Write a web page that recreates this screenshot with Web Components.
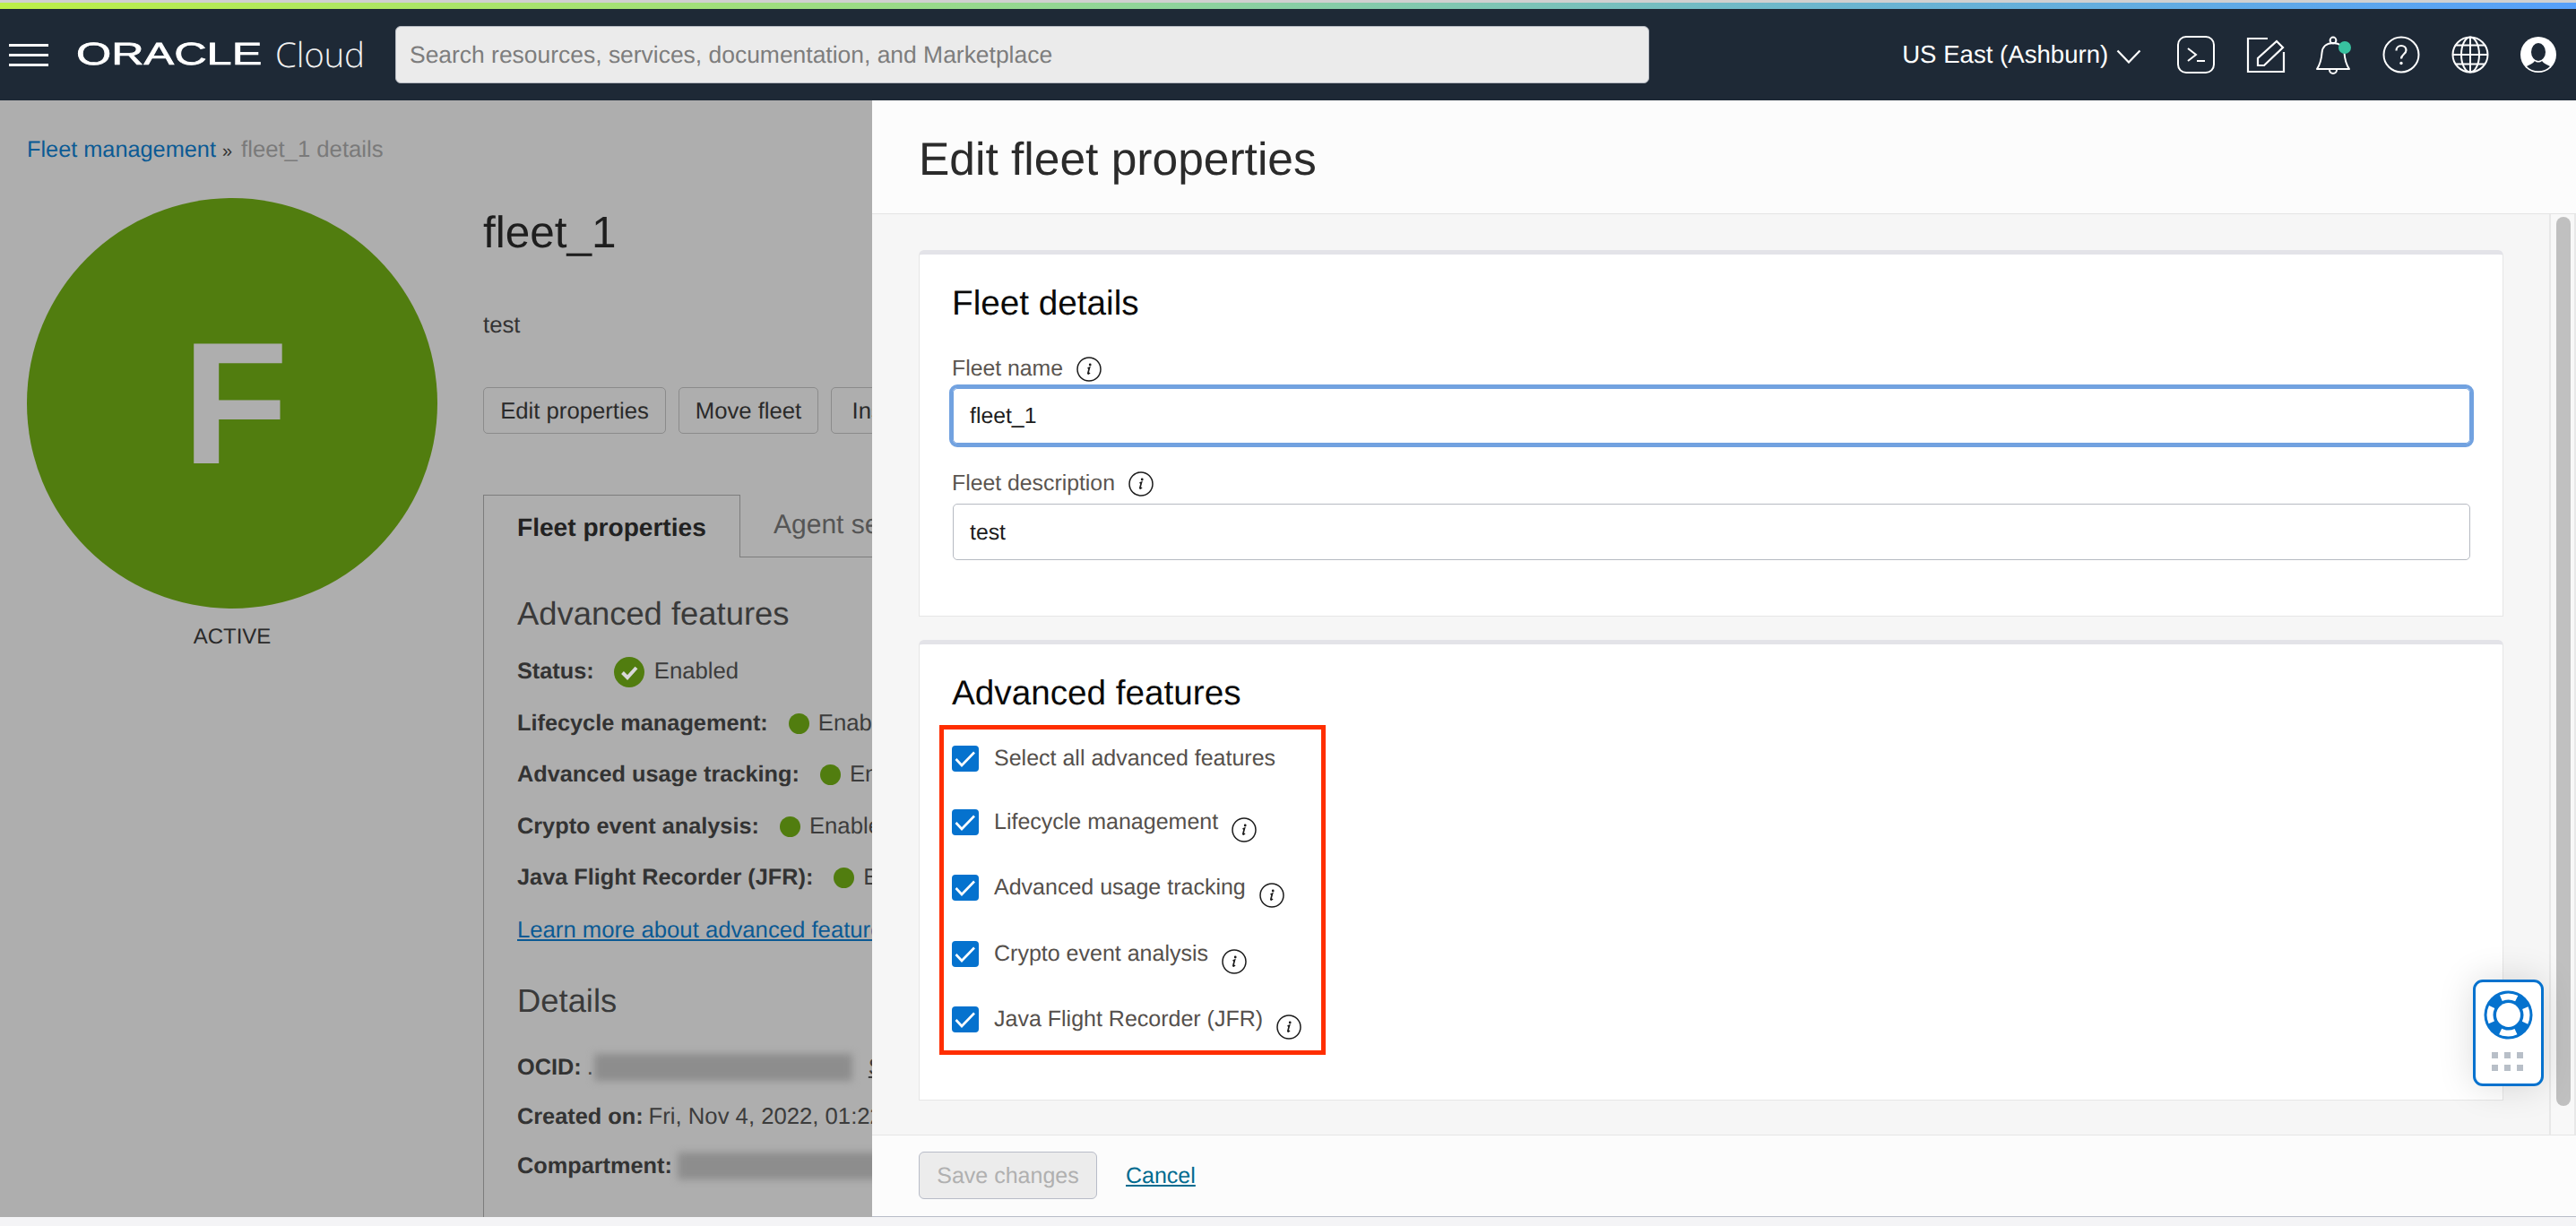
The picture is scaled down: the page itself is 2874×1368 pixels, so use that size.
<!DOCTYPE html>
<html lang="en">
<head>
<meta charset="utf-8">
<title>Edit fleet properties</title>
<style>
  html, body { margin: 0; height: 100%; }
  body { font-family: "Liberation Sans", Arial, sans-serif; background: #f4f4f6; overflow: hidden; text-rendering: geometricPrecision; }
</style>
</head>
<body>
<oci-page>
  <oci-topbar slot="top"></oci-topbar>
  <fleet-summary slot="left"></fleet-summary>
  <edit-drawer slot="right" heading="Edit fleet properties">
    <form-card heading="Fleet details" style="height:409px">
      <text-field label="Fleet name" value="fleet_1" focused style="margin-top:36px"></text-field>
      <text-field label="Fleet description" value="test" style="margin-top:30px"></text-field>
    </form-card>
    <form-card heading="Advanced features" style="height:514px;margin-top:26px">
      <div style="box-sizing:border-box;width:431px;height:368px;margin:13px 0 0 -15px;border:5px solid #ff2e00;padding:18px 0 0 9px">
        <check-row style="height:71px">Select all advanced features</check-row>
        <check-row info>Lifecycle management</check-row>
        <check-row info style="height:74px">Advanced usage tracking</check-row>
        <check-row info>Crypto event analysis</check-row>
        <check-row info>Java Flight Recorder (JFR)</check-row>
      </div>
    </form-card>
    <help-widget slot="float"></help-widget>
  </edit-drawer>
</oci-page>

<script>
const icons = {
  terminal: `<rect x="1" y="1" width="40" height="40" rx="9" fill="none" stroke="#fff" stroke-width="2"/>
    <path d="M12 14l9 7-9 7M22 28h9" fill="none" stroke="#fff" stroke-width="2"/>`,
  edit: `<path d="M24 3H2v37h40V18" fill="none" stroke="#fff" stroke-width="2.2"/>
    <path d="M13 33v-8L34 6l7 7-21 20z" fill="none" stroke="#fff" stroke-width="2.2"/>`,
  bell: `<circle cx="21" cy="5" r="3.4" fill="none" stroke="#fff" stroke-width="2"/>
    <path d="M3 37c4-6 5-11 5.500-18C9 12 14 8 21 8s12 4 12.500 11c.5 7 1.500 12 5.500 18z" fill="none" stroke="#fff" stroke-width="2" stroke-linejoin="round"/>
    <path d="M17 38a4 4 0 0 0 8 0" fill="none" stroke="#fff" stroke-width="2"/>
    <circle cx="34" cy="13" r="7" fill="#38c2a0"/>`,
  help: `<circle cx="21" cy="21" r="19.500" fill="none" stroke="#fff" stroke-width="2"/>
    <path d="M15.500 16.500c0-3.500 2.500-5.500 5.500-5.500s5.500 2 5.500 5c0 4.500-5.500 4.500-5.500 9.500" fill="none" stroke="#fff" stroke-width="2.200"/>
    <circle cx="21" cy="30.500" r="1.700" fill="#fff"/>`,
  globe: `<g fill="none" stroke="#fff" stroke-width="2"><circle cx="21" cy="21" r="19.500"/>
    <ellipse cx="21" cy="21" rx="10" ry="19.500"/><path d="M21 1.500v39M1.500 21h39M5 10.500h32M5 31.500h32"/></g>`,
  user: `<circle cx="21" cy="21" r="20" fill="#fff"/>
    <ellipse cx="21" cy="18" rx="8" ry="10" fill="#1e2936"/>
    <path d="M8 34c3-2 7-3 9-6 2 2 6 2 8 0 2 3 6 4 9 6-6 7-20 7-26 0z" fill="#1e2936"/>`
};

function tpl(css, html) {
  const t = document.createElement('template');
  t.innerHTML = `<style>${css}</style>${html}`;
  return t;
}

class BaseElement extends HTMLElement {
  constructor() {
    super();
    this.attachShadow({ mode: 'open' });
    this.shadowRoot.appendChild(this.constructor.template.content.cloneNode(true));
  }
}

class OciPage extends BaseElement {
  static template = tpl(`
    :host { display: grid; grid-template-rows: 112px 1246px 10px; grid-template-columns: 973px 1901px; width: 2874px; height: 1368px; }
    .top { grid-column: 1 / 3; }
    .left { background: #aeaeae; overflow: hidden; display: block; min-width: 0; }
    .right { background: #fff; min-width: 0; }
  `, `
    <div class="top"><slot name="top"></slot></div>
    <div class="left"><slot name="left"></slot></div>
    <div class="right"><slot name="right"></slot></div>
  `);
}

class OciIcon extends BaseElement {
  static template = tpl(`:host { display: inline-flex; width: 42px; height: 42px; } svg { width: 100%; height: 100%; overflow: visible; }`,
    `<svg viewBox="0 0 42 42"></svg>`);
  connectedCallback() {
    this.shadowRoot.querySelector('svg').innerHTML = icons[this.getAttribute('name')];
  }
}

class OciTopbar extends BaseElement {
  static template = tpl(`
    :host { display: block; color: #fff; font-family: "Liberation Sans", Arial, sans-serif; }
    .strip { height: 3px; background: #d0d0d0; }
    .grad { height: 7px; background: linear-gradient(90deg, #bcef48 0%, #8fd49a 45%, #6ab4d0 72%, #56a0fa 100%); }
    .bar { height: 102px; background: #1e2936; display: flex; align-items: center; padding-left: 10px; }
    .burger { width: 44px; display: flex; flex-direction: column; gap: 8px; }
    .burger i { display: block; height: 3px; background: #fff; }
    .oracle { width: 208px; margin-left: 31px; font-size: 35px; line-height: 40px; -webkit-text-stroke: .7px #fff; transform: scaleX(1.44); transform-origin: left center; white-space: nowrap; }
    .cloud { width: 134px; margin-left: 14px; font-family: "Open Sans", sans-serif; font-weight: 300; font-size: 38.500px; line-height: 40px; letter-spacing: -.2px; color: #f2f2f2; }
    .search { box-sizing: border-box; width: 1399px; height: 64px; background: #ebebeb; border: 1px solid #b6bac2; border-radius: 6px; padding-left: 15px; display: flex; align-items: center; color: #7d7d7d; font-size: 26.450px; }
    .region { margin-left: auto; font-size: 27.600px; white-space: nowrap; }
    .chev { width: 28px; height: 16px; margin: 4px 23px 0 9px; }
    .acts { display: flex; padding-right: 4px; }
    .acts div { width: 76.300px; display: flex; justify-content: center; }
  `, `
    <div class="strip"></div><div class="grad"></div>
    <div class="bar">
      <div class="burger"><i></i><i></i><i></i></div>
      <div class="oracle">ORACLE</div>
      <div class="cloud">Cloud</div>
      <div class="search">Search resources, services, documentation, and Marketplace</div>
      <div class="region">US East (Ashburn)</div>
      <svg class="chev" viewBox="0 0 28 16"><path d="M1.500 1.500L14 14.500 26.500 1.500" fill="none" stroke="#fff" stroke-width="2.200"/></svg>
      <div class="acts">
        <div><oci-icon name="terminal"></oci-icon></div>
        <div><oci-icon name="edit"></oci-icon></div>
        <div><oci-icon name="bell"></oci-icon></div>
        <div><oci-icon name="help"></oci-icon></div>
        <div><oci-icon name="globe"></oci-icon></div>
        <div><oci-icon name="user"></oci-icon></div>
      </div>
    </div>
  `);
}

class StatusRow extends BaseElement {
  static template = tpl(`
    :host { display: flex; align-items: center; height: 57.500px; white-space: nowrap; font-size: 25.700px; color: #3c3c3c; }
    .l { font-weight: 700; font-size: 25.300px; color: #333; flex: none; }
    .dot { width: 23px; height: 23px; border-radius: 50%; background: #517d0f; margin: 0 10px 0 23px; flex: none; }
  `, `<span class="l"><slot name="label"></slot></span><span class="dot"></span><slot></slot>`);
}

class FleetSummary extends BaseElement {
  static template = tpl(`
    :host { display: block; height: 1246px; color: #2a2a2a; font-size: 25.700px; overflow: hidden; }
    .crumb { height: 30px; line-height: 30px; padding: 40px 0 0 30px; white-space: nowrap; color: #7a7a7a; }
    .crumb a { color: #0b5a94; font-size: 25.300px; }
    .crumb b { color: #333; font-weight: 400; font-size: 20px; margin: 0 10px 0 7px; }
    .cols { display: flex; gap: 51px; margin-top: 39px; padding-left: 30px; height: 1137px; }
    .side { width: 458px; flex: none; text-align: center; }
    .avatar { height: 458px; border-radius: 50%; background: #517d0f; color: #aeaeae; font-weight: 700; font-size: 194px; display: flex; align-items: center; justify-content: center; }
    .avatar span { margin: 0 0 0 7px; }
    .active { margin-top: 17px; line-height: 30px; font-size: 24px; }
    .main { display: flex; flex-direction: column; width: 460px; flex: none; }
    h1 { font-size: 49.500px; font-weight: 400; line-height: 56px; margin: 11px 0 0; color: #1e1e1e; }
    .desc { line-height: 30px; margin-top: 60px; color: #333; }
    .btns { display: flex; gap: 14px; margin-top: 54px; }
    .btn { box-sizing: border-box; height: 52px; flex: none; padding-top: 2px; border: 1px solid #8b8b8b; border-radius: 5px; display: flex; align-items: center; justify-content: center; white-space: nowrap; color: #2a2a2a; }
    .tabs { display: flex; align-items: stretch; height: 70px; margin-top: 68px; white-space: nowrap; }
    .tab { box-sizing: border-box; flex: none; width: 287px; border: 1px solid #7d7d7d; border-bottom: 0; padding-left: 37px; line-height: 72px; font-size: 28.100px; font-weight: 700; color: #222; }
    .tab2 { flex: none; width: 300px; border-bottom: 1px solid #7d7d7d; padding-left: 37px; line-height: 68px; font-size: 30px; color: #555; }
    .panel { flex: 1; border-left: 1px solid #7d7d7d; padding: 41px 0 0 37px; white-space: nowrap; overflow: hidden; }
    h2 { font-size: 36.400px; font-weight: 400; line-height: 44px; margin: 0; color: #3a3a3a; }
    .rows { margin-top: 14px; }
    .chk { width: 34px; height: 34px; margin: 0 11px 0 22px; flex: none; }
    .learn { display: block; line-height: 59px; height: 57.500px; color: #0b5a94; text-decoration: underline; }
    .info { height: 55px; display: flex; align-items: center; color: #3c3c3c; }
    .info b { color: #333; font-size: 25.300px; margin-right: 6px; flex: none; }
    .blur { height: 30px; background: #8d8d8d; filter: blur(4px); flex: none; }
  `, `
    <div class="crumb"><a>Fleet management</a><b>»</b>fleet_1 details</div>
    <div class="cols">
      <div class="side">
        <div class="avatar"><span>F</span></div>
        <div class="active">ACTIVE</div>
      </div>
      <div class="main">
        <h1>fleet_1</h1>
        <div class="desc">test</div>
        <div class="btns">
          <div class="btn" style="width:204px">Edit properties</div>
          <div class="btn" style="width:156px">Move fleet</div>
          <div class="btn" style="width:130px">Inspect</div>
        </div>
        <div class="tabs"><div class="tab">Fleet properties</div><div class="tab2">Agent settings</div></div>
        <div class="panel">
          <h2>Advanced features</h2>
          <div class="rows">
            <div style="display:flex;align-items:center;height:57.500px">
              <b style="color:#333;font-size:25.300px">Status:</b>
              <svg class="chk" viewBox="0 0 34 34"><circle cx="17" cy="17" r="17" fill="#517d0f"/><path d="M9.500 17.500l5.500 5.500 10-11" fill="none" stroke="#d8d8d8" stroke-width="4"/></svg>
              <span style="color:#3c3c3c">Enabled</span>
            </div>
            <status-row><span slot="label">Lifecycle management:</span>Enabled</status-row>
            <status-row><span slot="label">Advanced usage tracking:</span>Enabled</status-row>
            <status-row><span slot="label">Crypto event analysis:</span>Enabled</status-row>
            <status-row><span slot="label">Java Flight Recorder (JFR):</span>Enabled</status-row>
            <a class="learn">Learn more about advanced features</a>
          </div>
          <h2 style="margin-top:29px">Details</h2>
          <div style="margin-top:24.500px">
            <div class="info"><b>OCID:</b>.<span class="blur" style="width:288px;margin:0 18px 0 1px"></span><u>Show</u></div>
            <div class="info"><b>Created on:</b>Fri, Nov 4, 2022, 01:22:10 UTC</div>
            <div class="info"><b>Compartment:</b><span class="blur" style="width:260px"></span></div>
          </div>
        </div>
      </div>
    </div>
  `);
}

class EditDrawer extends BaseElement {
  static template = tpl(`
    :host { display: flex; flex-direction: column; height: 1246px; background: #fcfcfc; position: relative; font-family: "Liberation Sans", Arial, sans-serif; }
    header { box-sizing: border-box; height: 127px; border-bottom: 1px solid #e4e4e4; padding: 33px 0 0 52px; font-size: 51.500px; line-height: 64px; color: #2b2b2b; white-space: nowrap; }
    .body { height: 1027px; display: flex; background: #f6f6f6; position: relative; }
    .scroll { flex: 1; box-sizing: border-box; padding: 40px 51px 0 52px; overflow: hidden; }
    .track { box-sizing: border-box; width: 30px; flex: none; border-left: 2px solid #e8e8e8; border-right: 2px solid #e8e8e8; padding: 3px 4px 0 6px; background: #f8f8f8; }
    .thumb { height: 992px; border-radius: 8px; background: #c0c0c0; }
    footer { box-sizing: border-box; height: 92px; border-top: 1px solid #e6e6e6; border-bottom: 1px solid #b8bcc8; background: #fcfcfc; display: flex; align-items: center; padding: 0 0 1px 52px; gap: 32px; font-size: 25px; }
    .save { box-sizing: border-box; width: 199px; height: 53px; padding-top: 2px; display: flex; align-items: center; justify-content: center; background: #ececec; border: 1px solid #b8bcc8; border-radius: 6px; color: #b0b0b0; white-space: nowrap; }
    .cancel { color: #006b8f; text-decoration: underline; margin-top: 2px; }
    ::slotted([slot=float]) { position: absolute; right: 36px; bottom: 54px; }
  `, `
    <header id="h"></header>
    <div class="body">
      <div class="scroll"><slot></slot></div>
      <div class="track"><div class="thumb"></div></div>
      <slot name="float"></slot>
    </div>
    <footer><div class="save">Save changes</div><a class="cancel">Cancel</a></footer>
  `);
  connectedCallback() {
    this.shadowRoot.getElementById('h').textContent = this.getAttribute('heading');
  }
}

class FormCard extends BaseElement {
  static template = tpl(`
    :host { display: block; box-sizing: border-box; background: #fff; border: 1px solid #e6e6e6; border-top: 5px solid #e3e3e8; border-radius: 6px 6px 0 0; padding: 31px 36px 0 37px; }
    h3 { margin: 0 0 0 -1px; font-size: 38.700px; font-weight: 400; line-height: 48px; height: 46px; color: #0a0a0a; }
  `, `<h3 id="h"></h3><slot></slot>`);
  connectedCallback() {
    this.shadowRoot.getElementById('h').textContent = this.getAttribute('heading');
  }
}

const infoIcon = `<svg viewBox="0 0 28 28" width="28" height="28"><circle cx="14" cy="14" r="13" fill="none" stroke="#1c1c1c" stroke-width="1.500"/>
  <path d="M12.500 13l2-.8-1.700 6.300c0 .8.800.8 2.200-.5" fill="none" stroke="#1c1c1c" stroke-width="1.700"/><circle cx="15.200" cy="9" r="1.400" fill="#1c1c1c"/></svg>`;

class TextField extends BaseElement {
  static template = tpl(`
    :host { display: block; font-size: 24.800px; }
    .lab { display: flex; align-items: center; gap: 15px; height: 30px; color: #5a5550; margin-left: -1px; }
    svg { display: block; }
    .box { box-sizing: border-box; height: 63px; margin-top: 7px; background: #fff; border: 1px solid #b6bac2; border-radius: 5px; padding: 2px 0 0 18px; display: flex; align-items: center; color: #1c1c1c; }
    :host([focused]) .box { outline: 4px solid #72a2e0; outline-offset: 0; height: 62px; margin-top: 6px; border-color: #72a2e0; }
  `, `<div class="lab"><span id="l"></span>${infoIcon}</div><div class="box" id="v"></div>`);
  connectedCallback() {
    this.shadowRoot.getElementById('l').textContent = this.getAttribute('label');
    this.shadowRoot.getElementById('v').textContent = this.getAttribute('value');
  }
}

class CheckRow extends BaseElement {
  static template = tpl(`
    :host { display: flex; align-items: flex-start; height: 73px; font-size: 25px; color: #55504c; white-space: nowrap; }
    .box { width: 30px; height: 29px; border-radius: 4px; background: #0572ce; flex: none; margin-right: 17px; }
    .box svg { display: block; }
    .t { line-height: 28px; }
    .i { margin: 9px 0 0 15px; display: none; }
    :host([info]) .i { display: block; }
    .i svg { display: block; }
  `, `<div class="box"><svg viewBox="0 0 30 29" width="30" height="29"><path d="M4.500 15l6.500 7L25 7.500" fill="none" stroke="#fff" stroke-width="2.600"/></svg></div>
      <span class="t"><slot></slot></span><span class="i">${infoIcon}</span>`);
}

class HelpWidget extends BaseElement {
  static template = tpl(`
    :host { display: block; box-sizing: border-box; width: 79px; height: 119px; background: #fff; border: 3px solid #0572ce; border-radius: 11px; box-shadow: 0 0 40px rgba(0,0,0,.14); padding: 9px 0 0 9px; }
    svg { display: block; }
    .dots { display: grid; grid-template-columns: repeat(3, 7px); gap: 7px; margin: 14px 0 0 9px; }
    .dots i { height: 7px; background: #b8bfc8; }
  `, `
    <svg width="55" height="55" viewBox="-27.500 -27.500 55 55">
      <circle r="27" fill="#0572ce"/>
      <circle r="20.500" fill="none" stroke="#fff" stroke-width="7" stroke-dasharray="17.900 14.300" stroke-dashoffset="8.950"/>
      <circle r="13.500" fill="#fff"/>
    </svg>
    <div class="dots"><i></i><i></i><i></i><i></i><i></i><i></i></div>
  `);
}

customElements.define('oci-icon', OciIcon);
customElements.define('oci-page', OciPage);
customElements.define('oci-topbar', OciTopbar);
customElements.define('status-row', StatusRow);
customElements.define('fleet-summary', FleetSummary);
customElements.define('edit-drawer', EditDrawer);
customElements.define('form-card', FormCard);
customElements.define('text-field', TextField);
customElements.define('check-row', CheckRow);
customElements.define('help-widget', HelpWidget);
</script>
</body>
</html>
